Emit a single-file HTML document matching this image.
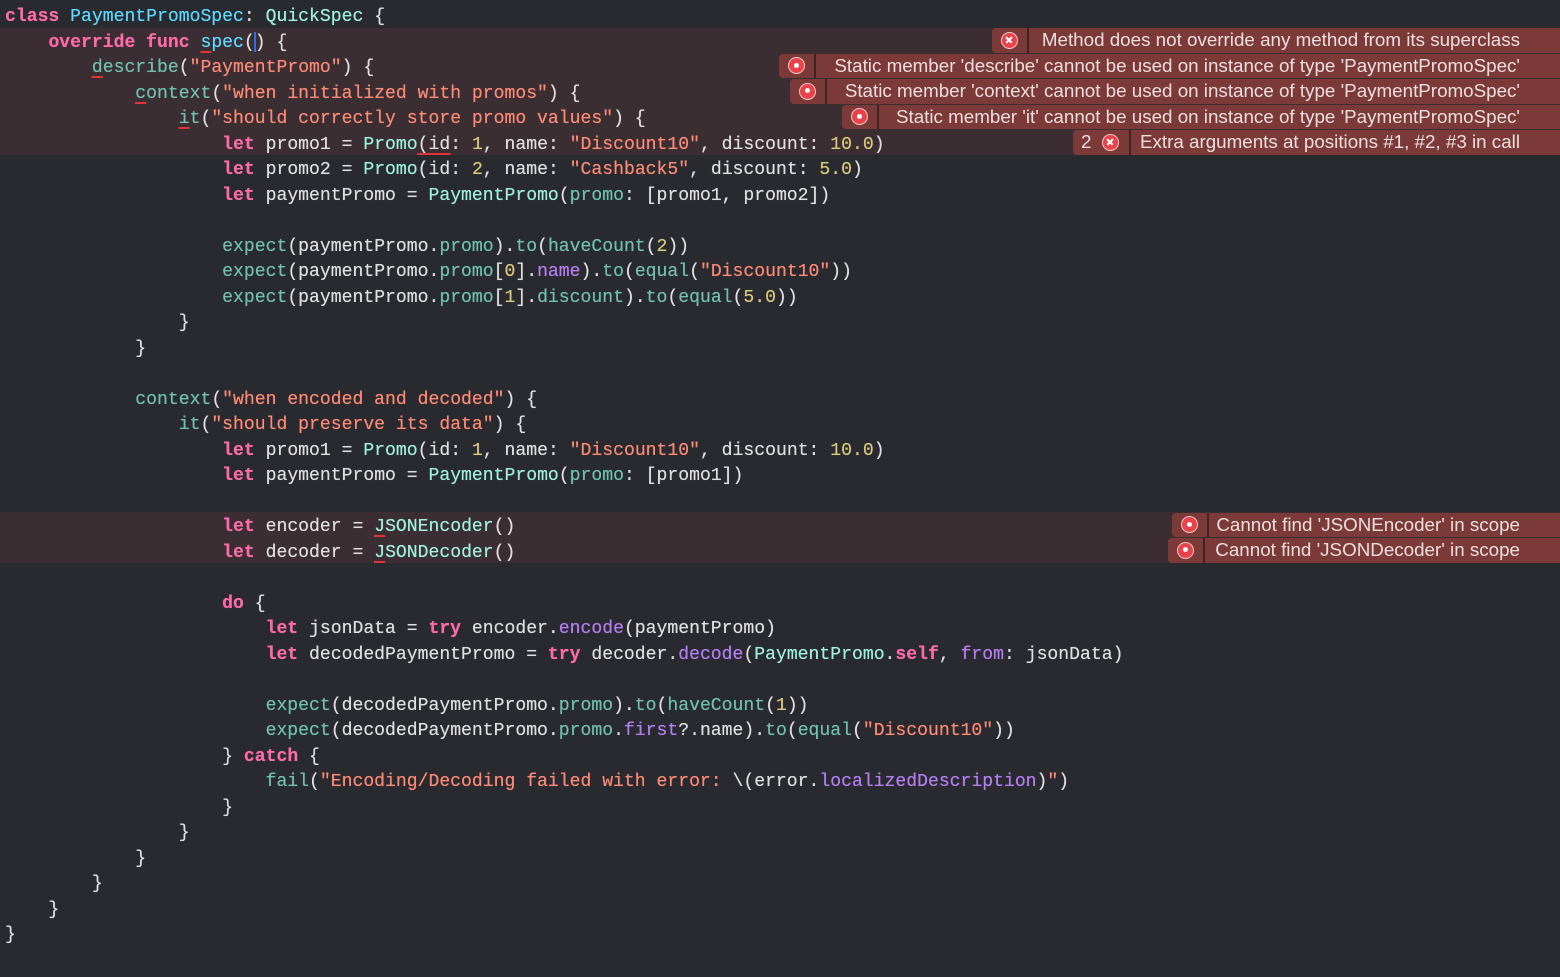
<!DOCTYPE html>
<html><head><meta charset="utf-8"><style>
html,body{margin:0;padding:0;background:#292a30;width:1560px;height:977px;overflow:hidden}
.ln{position:absolute;left:0;width:1560px;height:25.5px;line-height:25.5px;font-family:"Liberation Mono",monospace;font-size:18.1px;color:#dfdfe0;white-space:pre;padding-left:5px;padding-top:3px;box-sizing:border-box;text-shadow:0 0 0.4px currentColor}
.hl{background:#3b2e33}
.k{color:#fc6aa8;font-weight:bold}
.s{color:#fc8a75}
.t{color:#5dd8ff}
.c{color:#9ef1dd}
.f{color:#6fc1ad}
.p{color:#b57ef0}
.n{color:#d9c97c}
.u{text-decoration:underline;text-decoration-color:#e6303a;text-decoration-thickness:2px;text-underline-offset:4px}
.cur{display:inline-block;width:2px;height:20px;background:#2f6fe8;vertical-align:middle;margin:0 -1px}
.b{position:absolute;right:0;height:24.5px;background:#7b3a37;border-radius:4px 0 0 4px;font-family:"Liberation Sans",sans-serif;font-size:18.8px;color:#ecdede;line-height:24.5px}
.b .ic{position:absolute;left:9px;top:3.5px;width:17px;height:17px;border-radius:50%;background:#e8434b;border:1.5px solid #f3c6c6;box-sizing:border-box}
.b .sep{position:absolute;left:35px;top:0;width:2px;height:24.5px;background:#3a2426}
.b .m{position:absolute;right:40px;top:0;white-space:nowrap}
.x::before,.x::after{content:"";position:absolute;left:3px;top:6.2px;width:8px;height:1.6px;background:#fff;transform:rotate(45deg)}
.x::after{transform:rotate(-45deg)}
.d::before{content:"";position:absolute;left:4.5px;top:4.5px;width:5px;height:5px;border-radius:50%;background:#fff}
</style></head><body>
<div class="ln" style="top:2.25px"><span class="k">class</span> <span class="t">PaymentPromoSpec</span>: <span class="c">QuickSpec</span> {</div>
<div class="ln hl" style="top:27.75px">    <span class="k">override</span> <span class="k">func</span> <span class="t"><span class="u">s</span>pec</span>(<span class="cur"></span>) {</div>
<div class="ln hl" style="top:53.25px">        <span class="f"><span class="u">d</span>escribe</span>(<span class="s">"PaymentPromo"</span>) {</div>
<div class="ln hl" style="top:78.75px">            <span class="f"><span class="u">c</span>ontext</span>(<span class="s">"when initialized with promos"</span>) {</div>
<div class="ln hl" style="top:104.25px">                <span class="f"><span class="u">i</span>t</span>(<span class="s">"should correctly store promo values"</span>) {</div>
<div class="ln hl" style="top:129.75px">                    <span class="k">let</span> promo1 = <span class="c">Promo</span><span class="u">(</span><span class="u">id</span>: <span class="n">1</span>, name: <span class="s">"Discount10"</span>, discount: <span class="n">10.0</span>)</div>
<div class="ln" style="top:155.25px">                    <span class="k">let</span> promo2 = <span class="c">Promo</span>(id: <span class="n">2</span>, name: <span class="s">"Cashback5"</span>, discount: <span class="n">5.0</span>)</div>
<div class="ln" style="top:180.75px">                    <span class="k">let</span> paymentPromo = <span class="c">PaymentPromo</span>(<span class="f">promo</span>: [promo1, promo2])</div>
<div class="ln" style="top:231.75px">                    <span class="f">expect</span>(paymentPromo.<span class="f">promo</span>).<span class="f">to</span>(<span class="f">haveCount</span>(<span class="n">2</span>))</div>
<div class="ln" style="top:257.25px">                    <span class="f">expect</span>(paymentPromo.<span class="f">promo</span>[<span class="n">0</span>].<span class="p">name</span>).<span class="f">to</span>(<span class="f">equal</span>(<span class="s">"Discount10"</span>))</div>
<div class="ln" style="top:282.75px">                    <span class="f">expect</span>(paymentPromo.<span class="f">promo</span>[<span class="n">1</span>].<span class="f">discount</span>).<span class="f">to</span>(<span class="f">equal</span>(<span class="n">5.0</span>))</div>
<div class="ln" style="top:308.25px">                }</div>
<div class="ln" style="top:333.75px">            }</div>
<div class="ln" style="top:384.75px">            <span class="f">context</span>(<span class="s">"when encoded and decoded"</span>) {</div>
<div class="ln" style="top:410.25px">                <span class="f">it</span>(<span class="s">"should preserve its data"</span>) {</div>
<div class="ln" style="top:435.75px">                    <span class="k">let</span> promo1 = <span class="c">Promo</span>(id: <span class="n">1</span>, name: <span class="s">"Discount10"</span>, discount: <span class="n">10.0</span>)</div>
<div class="ln" style="top:461.25px">                    <span class="k">let</span> paymentPromo = <span class="c">PaymentPromo</span>(<span class="f">promo</span>: [promo1])</div>
<div class="ln hl" style="top:512.25px">                    <span class="k">let</span> encoder = <span class="c"><span class="u">J</span>SONEncoder</span>()</div>
<div class="ln hl" style="top:537.75px">                    <span class="k">let</span> decoder = <span class="c"><span class="u">J</span>SONDecoder</span>()</div>
<div class="ln" style="top:588.75px">                    <span class="k">do</span> {</div>
<div class="ln" style="top:614.25px">                        <span class="k">let</span> jsonData = <span class="k">try</span> encoder.<span class="p">encode</span>(paymentPromo)</div>
<div class="ln" style="top:639.75px">                        <span class="k">let</span> decodedPaymentPromo = <span class="k">try</span> decoder.<span class="p">decode</span>(<span class="c">PaymentPromo</span>.<span class="k">self</span>, <span class="p">from</span>: jsonData)</div>
<div class="ln" style="top:690.75px">                        <span class="f">expect</span>(decodedPaymentPromo.<span class="f">promo</span>).<span class="f">to</span>(<span class="f">haveCount</span>(<span class="n">1</span>))</div>
<div class="ln" style="top:716.25px">                        <span class="f">expect</span>(decodedPaymentPromo.<span class="f">promo</span>.<span class="p">first</span>?.name).<span class="f">to</span>(<span class="f">equal</span>(<span class="s">"Discount10"</span>))</div>
<div class="ln" style="top:741.75px">                    } <span class="k">catch</span> {</div>
<div class="ln" style="top:767.25px">                        <span class="f">fail</span>(<span class="s">"Encoding/Decoding failed with error: </span>\(error.<span class="p">localizedDescription</span>)<span class="s">"</span>)</div>
<div class="ln" style="top:792.75px">                    }</div>
<div class="ln" style="top:818.25px">                }</div>
<div class="ln" style="top:843.75px">            }</div>
<div class="ln" style="top:869.25px">        }</div>
<div class="ln" style="top:894.75px">    }</div>
<div class="ln" style="top:920.25px">}</div>

<div class="b" style="top:28.25px;left:992px"><span class="ic x"></span><span class="sep"></span><span class="m">Method does not override any method from its superclass</span></div>
<div class="b" style="top:53.75px;left:779px"><span class="ic d"></span><span class="sep"></span><span class="m">Static member 'describe' cannot be used on instance of type 'PaymentPromoSpec'</span></div>
<div class="b" style="top:79.25px;left:790px"><span class="ic d"></span><span class="sep"></span><span class="m">Static member 'context' cannot be used on instance of type 'PaymentPromoSpec'</span></div>
<div class="b" style="top:104.75px;left:842px"><span class="ic d"></span><span class="sep"></span><span class="m">Static member 'it' cannot be used on instance of type 'PaymentPromoSpec'</span></div>
<div class="b" style="top:130.25px;left:1073px"><span style="position:absolute;left:8px">2</span><span class="ic x" style="left:29px"></span><span class="sep" style="left:56px"></span><span class="m">Extra arguments at positions #1, #2, #3 in call</span></div>
<div class="b" style="top:512.75px;left:1172px"><span class="ic d"></span><span class="sep"></span><span class="m">Cannot find 'JSONEncoder' in scope</span></div>
<div class="b" style="top:538.25px;left:1168px"><span class="ic d"></span><span class="sep"></span><span class="m">Cannot find 'JSONDecoder' in scope</span></div>
</body></html>
